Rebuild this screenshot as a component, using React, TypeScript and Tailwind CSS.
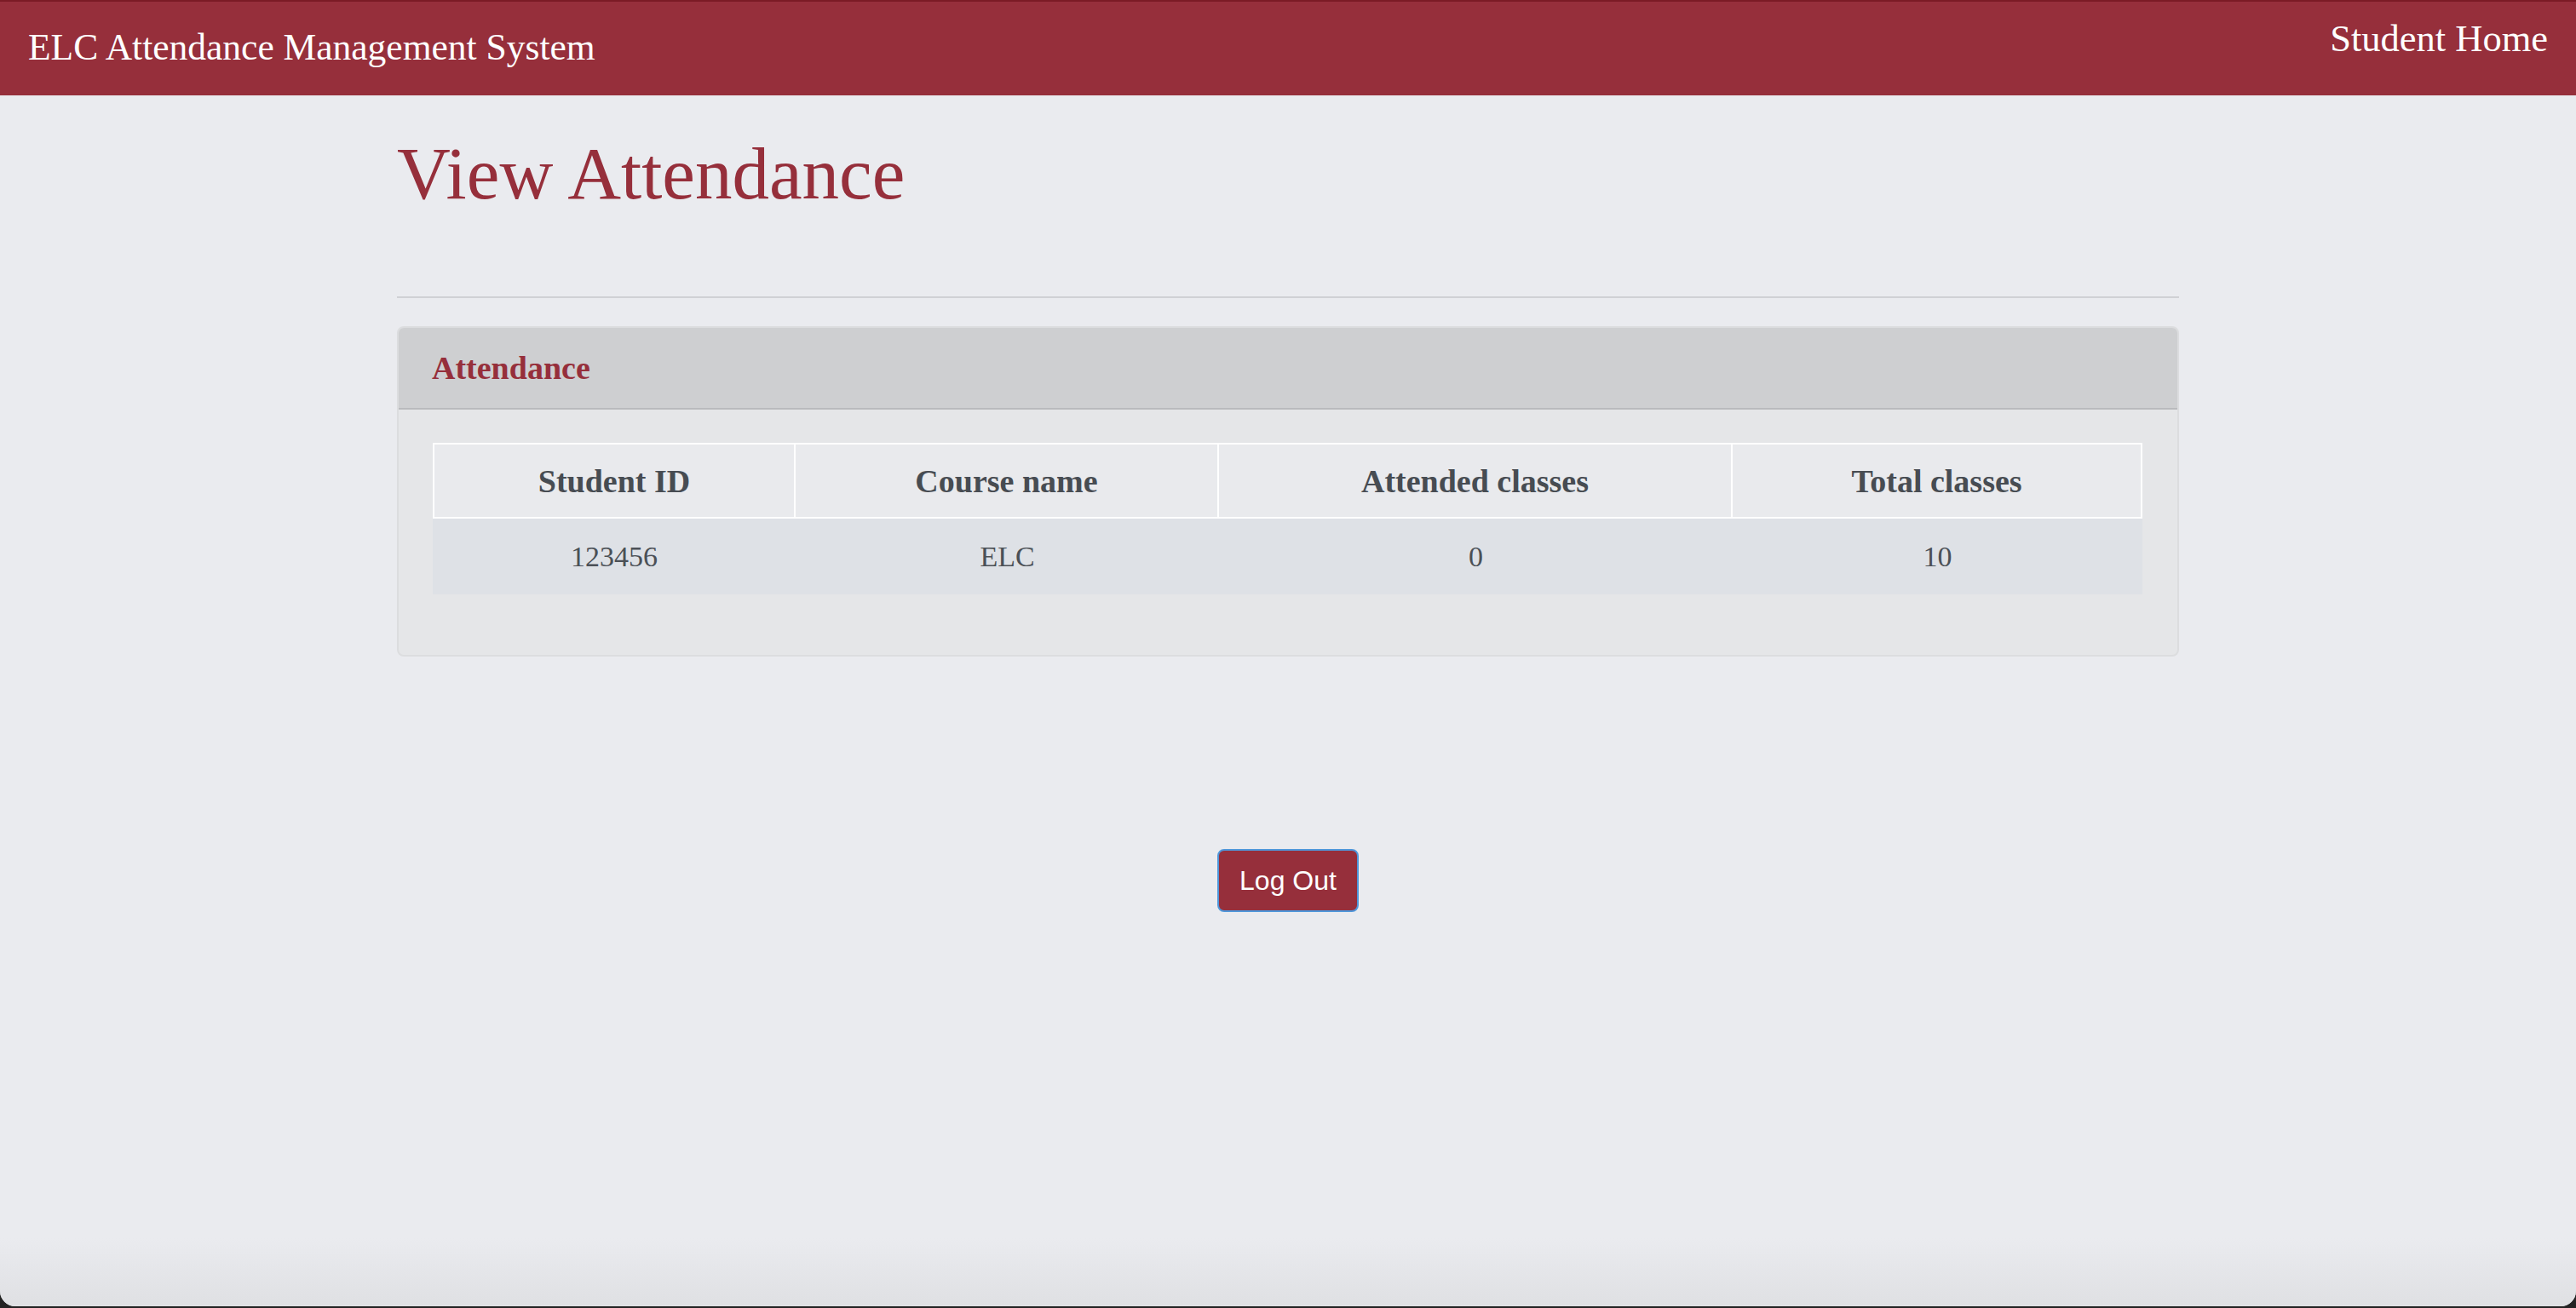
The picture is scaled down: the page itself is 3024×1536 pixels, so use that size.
import React from "react";

const cols = ["Student ID", "Course name", "Attended classes", "Total classes"];
const row = ["123456", "ELC", "0", "10"];
const widths = ["w-[426px]", "w-[497px]", "w-[603px]", "w-[481px]"];

export default function App() {
  return (
    <div className="h-[1536px] w-full bg-[#232323] overflow-hidden">
      <div className="relative h-[1534px] w-full rounded-b-[18px] overflow-hidden bg-[#eaebef] font-['Liberation_Serif',serif]">
        {/* Navbar */}
        <header className="h-[112px] border-t-2 border-[#7b1b25] bg-[#962f3b] flex items-start justify-between pl-[33px] pr-[33px]">
          <div className="mt-[32px] text-[43.5px] leading-[43px] text-white whitespace-nowrap">
            ELC Attendance Management System
          </div>
          <div className="mt-[21px] text-[44.5px] leading-[44px] text-white whitespace-nowrap">
            Student Home
          </div>
        </header>

        {/* Content */}
        <main className="w-[2092px] mx-auto flex flex-col">
          <h1 className="mt-[49px] text-[87px] leading-[86px] text-[#962f3b] font-normal">
            View Attendance
          </h1>
          <div className="mt-[101px] h-[2px] bg-[#d0d1d5]" />

          <section className="mt-[33px] rounded-[8px] border-2 border-[#dcdddf] bg-[#e5e6e8] overflow-hidden">
            <div className="h-[96px] bg-[#cecfd1] border-b-2 border-[#b9babd] flex items-center pl-[39px]">
              <span className="text-[38px] font-bold text-[#962f3b] leading-none">Attendance</span>
            </div>
            <div className="pt-[39px] pb-[71px] pl-[40px]">
              <div className="w-[2007px]">
                <div className="flex h-[89px] border-2 border-white bg-[#e9eaed]">
                  {cols.map((c, i) => (
                    <div
                      key={c}
                      className={`${i === 0 ? "w-[424px]" : widths[i]} ${
                        i < 3 ? "border-r-2 border-white" : ""
                      } flex items-center justify-center text-[38px] font-bold text-[#474c52] leading-none`}
                      style={i === 3 ? { flex: 1 } : undefined}
                    >
                      {c}
                    </div>
                  ))}
                </div>
                <div className="flex h-[89px] bg-[#dee1e6]">
                  {row.map((c, i) => (
                    <div
                      key={i}
                      className={`${widths[i]} flex items-center justify-center text-[34px] text-[#4b5056] leading-none`}
                    >
                      {c}
                    </div>
                  ))}
                </div>
              </div>
            </div>
          </section>

          <div className="mt-[226px] flex justify-center">
            <button className="w-[166px] h-[74px] rounded-[8px] border-2 border-[#4f97da] bg-[#962f3b] text-white text-[32px] font-['Liberation_Sans',Arial,sans-serif] leading-none">
              Log Out
            </button>
          </div>
        </main>

        {/* bottom window shading */}
        <div className="pointer-events-none absolute bottom-0 left-0 right-0 h-[80px] bg-gradient-to-t from-[#dfe0e3] to-transparent" />
      </div>
    </div>
  );
}
